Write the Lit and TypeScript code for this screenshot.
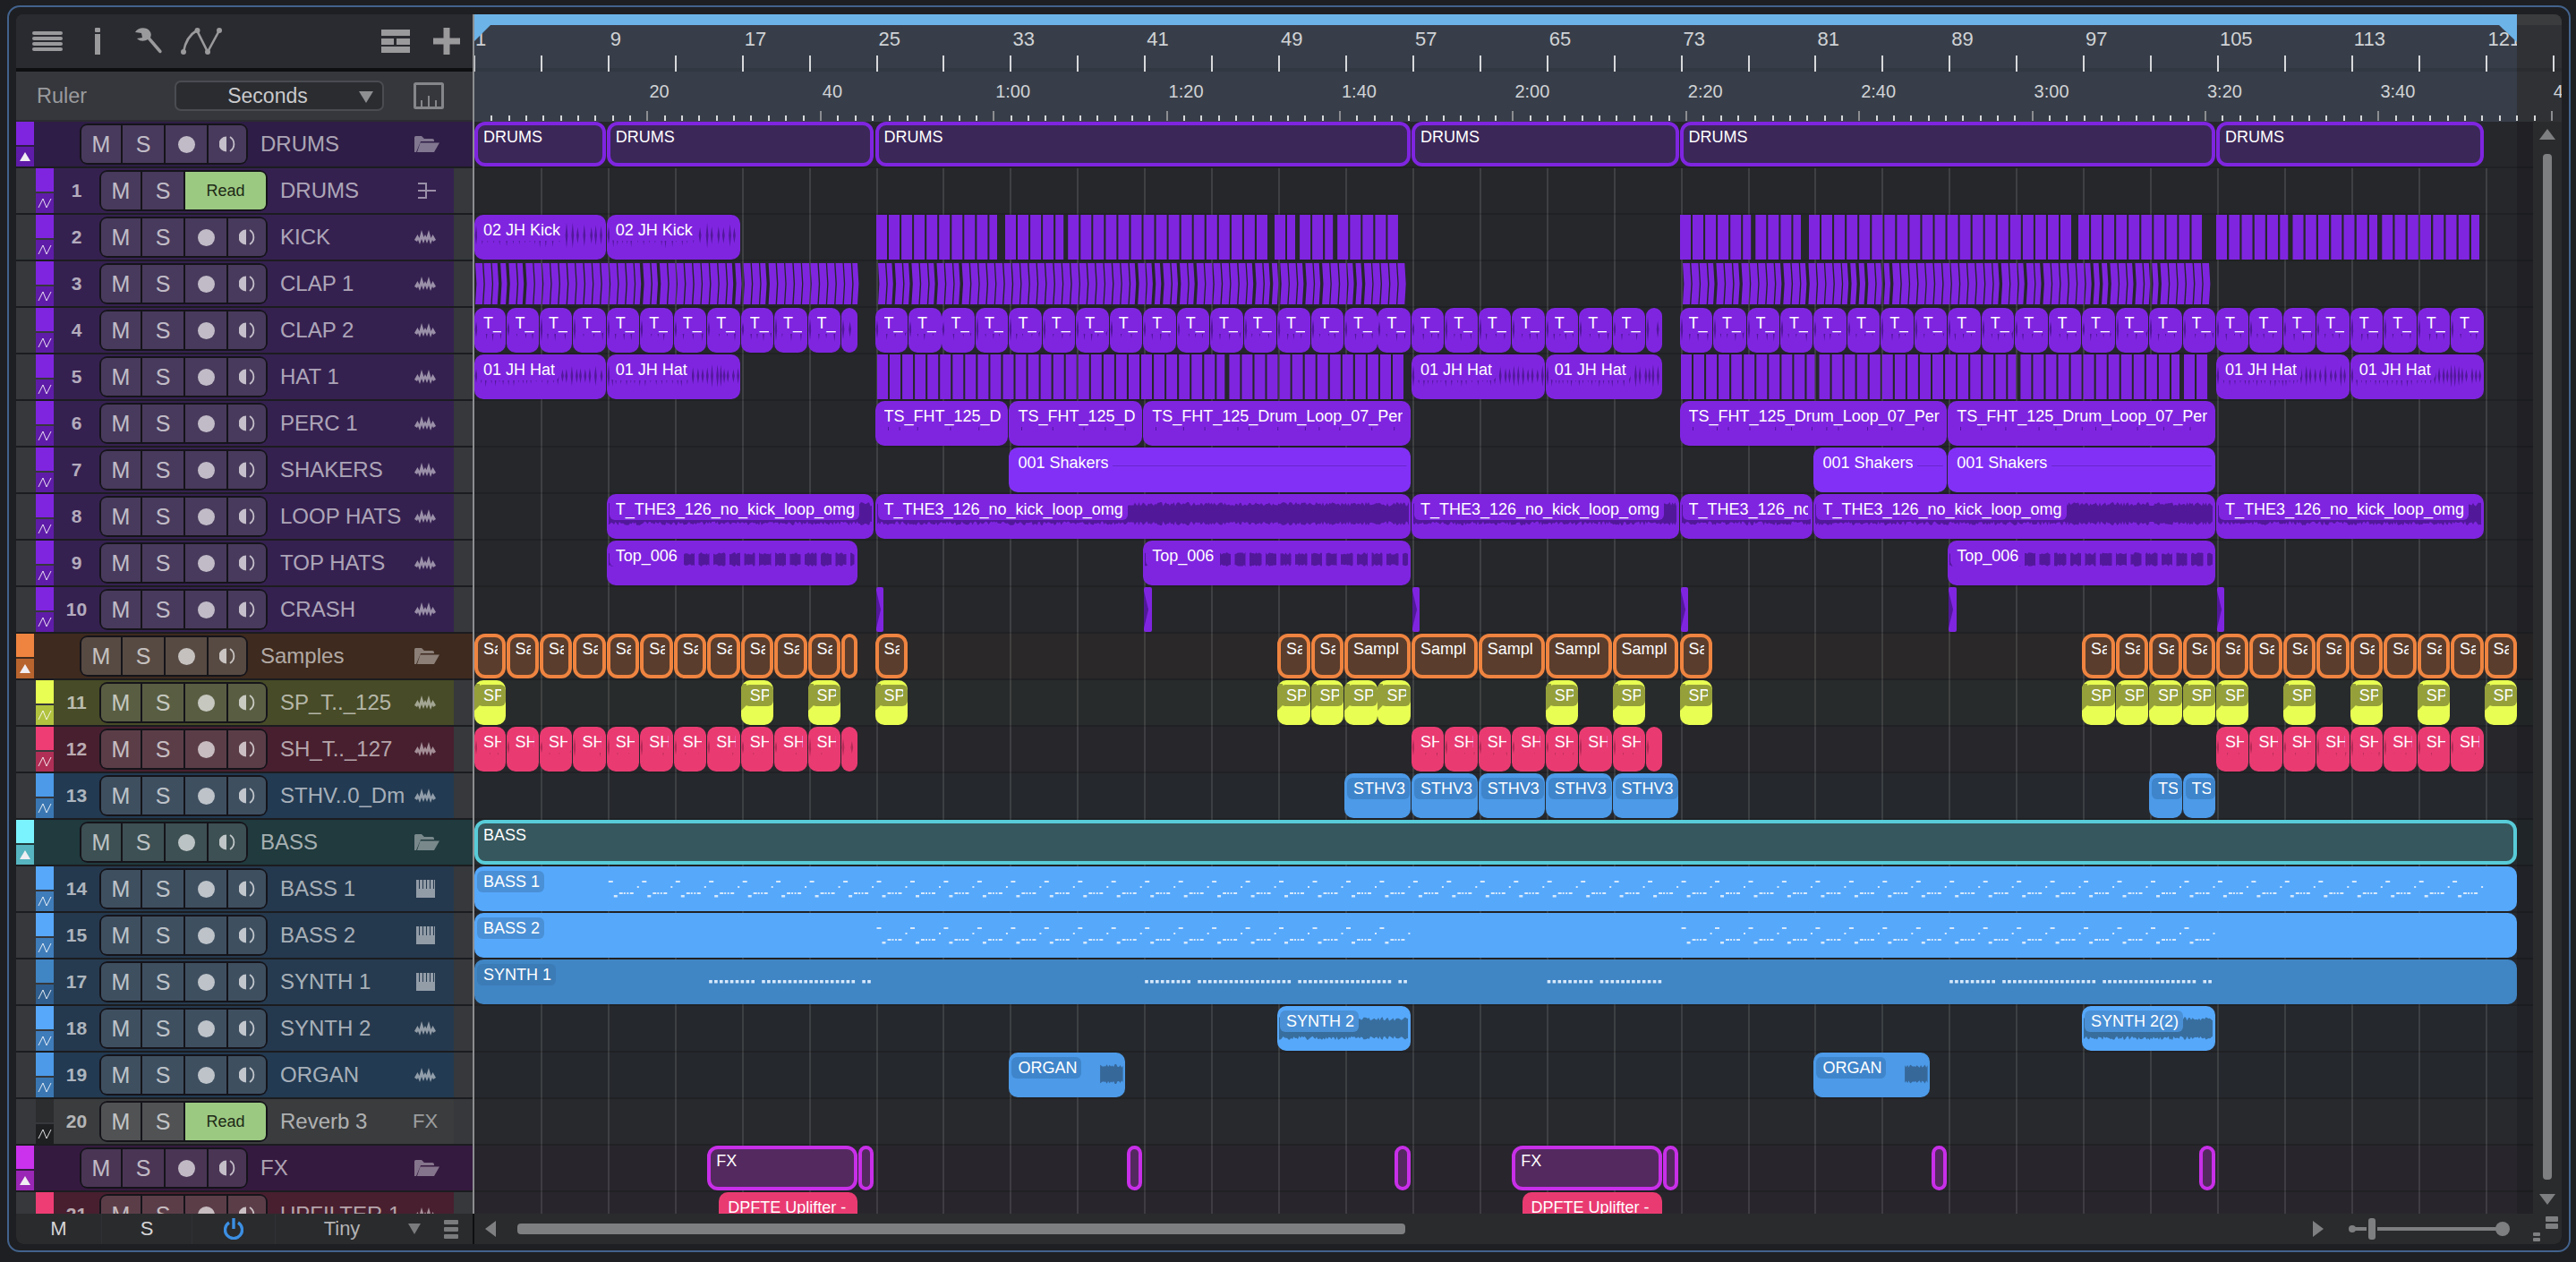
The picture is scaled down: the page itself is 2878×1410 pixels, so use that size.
import { LitElement, html, css } from "lit";
import { customElement } from "lit/decorators.js";

const BAR = 18.73;
const ORIGIN = 1; // x of bar 1 inside the arrange column
const bx = (b: number) => ORIGIN + (b - 1) * BAR;

type Clip = { s: number; e: number; t?: string; c: string; w?: string; folder?: boolean; tight?: boolean };
type Row = {
  n?: string; name: string; theme: string; lane: string; folder?: boolean; read?: boolean; icon?: string;
  clips?: Clip[]; extra?: string;
};

function rng(seed: number) {
  let s = seed * 9301 + 49297;
  return () => { s = (s * 9301 + 49297) % 233280; return s / 233280; };
}
function spikes(w: number, period: number, A: number, c: number, seed: number, from = 2) {
  const r = rng(seed); let d = "";
  for (let x = from; x < w - 2; x += period * (0.7 + r() * 0.6)) {
    const a = A * (0.55 + r() * 0.45);
    d += `M${(x - 1.4).toFixed(1)} ${c}L${x.toFixed(1)} ${(c - a).toFixed(1)}L${(x + 1.4).toFixed(1)} ${c}L${x.toFixed(1)} ${(c + a).toFixed(1)}Z`;
  }
  return d;
}
function dense(w: number, A: number, c: number, seed: number, burst = 0, from = 2) {
  const r = rng(seed); let up = "", dn: string[] = [];
  let first = true; let d = "";
  const flush = () => { if (!first) { d += up + dn.reverse().join("") + "Z"; } up = ""; dn = []; first = true; };
  for (let x = from; x < w - 2; x += 1.5) {
    const ph = burst ? (x % burst) / burst : 0;
    if (burst && ph > 0.82) { flush(); continue; }
    const a = A * (0.65 + r() * 0.35);
    up += `${first ? "M" : "L"}${x.toFixed(1)} ${(c - a).toFixed(1)}`;
    dn.push(`L${x.toFixed(1)} ${(c + a).toFixed(1)}`);
    first = false;
  }
  flush();
  return d;
}
function waveFor(kind: string, w: number, seed: number) {
  switch (kind) {
    case "kick": return spikes(w, 6.2, 15, 23, seed);
    case "hat": return spikes(w, 5.2, 13, 24, seed);
    case "t": return spikes(w, 9, 14, 24, seed);
    case "sh": return spikes(w, 12, 11, 23, seed);
    case "dense": return dense(w, 13, 22, seed, 0, 2);
    case "top": return dense(w, 8, 21, seed, 17, 2);
    case "synth": return dense(w, 13, 25, seed, 0, 2);
    case "organ": return dense(w, 11, 24, seed, 0, Math.max(2, w - 28));
    case "sparse": { let d = ""; const r = rng(seed); for (let x = 14; x < w; x += 12 + r() * 26) d += `M${x.toFixed(1)} 25h1v8h-1Z`; return d; }
    case "line": return `M100 20h${Math.max(0, w - 104)}v1h-${Math.max(0, w - 104)}Z`;
    case "crash": return `M0 4L${w * 0.6} 25L0 46Z`;
    case "yellow": return "M0 4h6v24l-6 6Z";
  }
  return "";
}

function seq(start: number, end: number, step: number, c: string, t: string, w?: string): Clip[] {
  const out: Clip[] = [];
  for (let b = start; b + step <= end + 0.001; b += step) out.push({ s: b, e: b + step, t, c, w });
  return out;
}
function at(bars: number[], len: number, c: string, t: string, w?: string): Clip[] {
  return bars.map((b) => ({ s: b, e: b + len, t, c, w }));
}

// Small block patterns (kick / clap / hat hits), one path per lane. from/to are page x.
function blocks(from: number, to: number, pitch: number, width: number, gaps: [number, number][], seed: number, chevron = false) {
  const r = rng(seed); let d = "";
  let x = from;
  while (x + 3 < to) {
    const g = gaps.find(([a, b]) => x + width > a && x < b);
    let wd = chevron ? (r() < 0.25 ? width - 2 : width) : (r() < 0.08 ? width - 3 : width);
    wd = Math.min(wd, to - x);
    const X = x - 528;
    if (g) {
      if (g[0] - x > 3) d += `M${X.toFixed(1)} 0h${(g[0] - x).toFixed(1)}v50h-${(g[0] - x).toFixed(1)}Z`;
      x = g[1];
      continue;
    }
    if (chevron) d += `M${X.toFixed(1)} 2h${wd}l1.4 23l-1.4 23h-${wd}l1.4 -23Z`;
    else d += `M${X.toFixed(1)} 0h${wd}v50h-${wd}Z`;
    x += pitch;
  }
  return d;
}
function bassNotes(segments: [number, number][]) {
  let d = "";
  const unit = 2 * BAR;
  for (const [s, e] of segments) {
    for (let X = bx(s) + 1; X < bx(e) - 8; X += unit) {
      d += `M${X.toFixed(1)} 16h5v2h-5Z`;
      d += `M${(X + 6).toFixed(1)} 32h4v2.5h-4Z`;
      d += `M${(X + 12).toFixed(1)} 29h4v2h-4ZM${(X + 17).toFixed(1)} 29h2v2h-2ZM${(X + 20.5).toFixed(1)} 29h2v2h-2ZM${(X + 24).toFixed(1)} 29h4v2h-4Z`;
      d += `M${(X + 32).toFixed(1)} 22h2v2h-2Z`;
    }
  }
  return d;
}
function synthDots(segments: [number, number][]) {
  let d = "";
  for (const [s, e] of segments) {
    for (let x = bx(s) + 1; x < bx(e) - 4; x += 5.9) {
      const off = (x - bx(s)) % 56;
      if (off > 52) continue;
      d += `M${x.toFixed(1)} 23h3.6v3.6h-3.6Z`;
    }
  }
  return d;
}

const P = "c-purple";
const kickGaps = (o: number): [number, number][] => [[o + 135, o + 144], [o + 437, o + 445]];

const SA = "Sa";
const ROWS: Row[] = [
  { name: "DRUMS", theme: "t-purple-f", lane: "l-purple", folder: true,
    clips: [[1, 9], [9, 25], [25, 57], [57, 73], [73, 105], [105, 121]].map(([s, e]) => ({ s, e, t: "DRUMS", c: "c-f-purple", folder: true })) },
  { n: "1", name: "DRUMS", theme: "t-purple", lane: "l-purple", read: true, icon: "bus" },
  { n: "2", name: "KICK", theme: "t-purple", lane: "l-purple", icon: "wave",
    clips: at([1, 9], 8, P, "02 JH Kick", "kick"),
    extra: blocks(979, 1562, 14.05, 12, kickGaps(979), 3) + blocks(1877, 2460, 14.05, 12, kickGaps(1877), 5) + blocks(2476, 2775, 14.25, 12, [], 7) },
  { n: "3", name: "CLAP 1", theme: "t-purple", lane: "l-purple", icon: "wave",
    extra: blocks(531, 958, 9.36, 8, [], 11, true) + blocks(981, 1570, 9.36, 8, [], 12, true) + blocks(1880, 2468, 9.36, 8, [], 13, true) },
  { n: "4", name: "CLAP 2", theme: "t-purple", lane: "l-purple", icon: "wave",
    clips: [
      ...seq(1, 23, 2, P, "T_", "t"), { s: 23, e: 24, c: P, w: "t" },
      ...seq(25, 57, 2, P, "T_", "t"),
      ...seq(57, 71, 2, P, "T_", "t"), { s: 71, e: 72, c: P, w: "t" },
      ...seq(73, 105, 2, P, "T_", "t"),
      ...seq(105, 121, 2, P, "T_", "t"),
    ] },
  { n: "5", name: "HAT 1", theme: "t-purple", lane: "l-purple", icon: "wave",
    clips: [...at([1, 9], 8, P, "01 JH Hat", "hat"), { s: 57, e: 65, t: "01 JH Hat", c: P, w: "hat" }, { s: 65, e: 72, t: "01 JH Hat", c: P, w: "hat" },
      { s: 105, e: 113, t: "01 JH Hat", c: P, w: "hat" }, { s: 113, e: 121, t: "01 JH Hat", c: P, w: "hat" }],
    extra: blocks(980, 1570, 14.05, 12, [], 21) + blocks(1878, 2468, 14.05, 12, [], 23) },
  { n: "6", name: "PERC 1", theme: "t-purple", lane: "l-purple", icon: "wave",
    clips: [
      { s: 25, e: 33, t: "TS_FHT_125_D", c: P, w: "sparse" }, { s: 33, e: 41, t: "TS_FHT_125_D", c: P, w: "sparse" },
      { s: 41, e: 57, t: "TS_FHT_125_Drum_Loop_07_Per", c: P, w: "sparse" },
      { s: 73, e: 89, t: "TS_FHT_125_Drum_Loop_07_Per", c: P, w: "sparse" }, { s: 89, e: 105, t: "TS_FHT_125_Drum_Loop_07_Per", c: P, w: "sparse" },
    ] },
  { n: "7", name: "SHAKERS", theme: "t-purple", lane: "l-purple", icon: "wave",
    clips: [{ s: 33, e: 57, t: "001 Shakers", c: "c-violet", w: "line" }, { s: 81, e: 89, t: "001 Shakers", c: "c-violet", w: "line" }, { s: 89, e: 105, t: "001 Shakers", c: "c-violet", w: "line" }] },
  { n: "8", name: "LOOP HATS", theme: "t-purple", lane: "l-purple", icon: "wave",
    clips: [[9, 25], [25, 57], [57, 73], [73, 81], [81, 105], [105, 121]].map(([s, e]) => ({ s, e, t: e - s < 10 ? "T_THE3_126_nc" : "T_THE3_126_no_kick_loop_omg", c: P, w: "dense" })) },
  { n: "9", name: "TOP HATS", theme: "t-purple", lane: "l-purple", icon: "wave",
    clips: [[9, 24], [41, 57], [89, 105]].map(([s, e]) => ({ s, e, t: "Top_006", c: P, w: "top" })) },
  { n: "10", name: "CRASH", theme: "t-purple", lane: "l-purple", icon: "wave",
    clips: [25, 41, 57, 73, 89, 105].map((s) => ({ s, e: s + 0.45, c: "c-crash", w: "crash", tight: true })) },
  { name: "Samples", theme: "t-orange-f", lane: "l-orange", folder: true,
    clips: [
      ...seq(1, 23, 2, "c-f-orange", SA), { s: 23, e: 24, c: "c-f-orange" },
      { s: 25, e: 27, t: SA, c: "c-f-orange" }, { s: 49, e: 51, t: SA, c: "c-f-orange" }, { s: 51, e: 53, t: SA, c: "c-f-orange" },
      ...seq(53, 73, 4, "c-f-orange", "Sampl"),
      { s: 73, e: 75, t: SA, c: "c-f-orange" },
      ...seq(97, 123, 2, "c-f-orange", SA),
    ].map((c) => ({ ...c, folder: true })) },
  { n: "11", name: "SP_T.._125", theme: "t-yellow", lane: "l-yellow", icon: "wave",
    clips: at([1, 17, 21, 25, 49, 51, 53, 55, 65, 69, 73, 97, 99, 101, 103, 105, 109, 113, 117, 121], 2, "c-yellow", "SP", "yellow") },
  { n: "12", name: "SH_T.._127", theme: "t-pink", lane: "l-pink", icon: "wave",
    clips: [
      ...seq(1, 23, 2, "c-pink", "SH", "sh"), { s: 23, e: 24, c: "c-pink", w: "sh" },
      ...seq(57, 71, 2, "c-pink", "SH", "sh"), { s: 71, e: 72, c: "c-pink", w: "sh" },
      ...seq(105, 121, 2, "c-pink", "SH", "sh"),
    ] },
  { n: "13", name: "STHV..0_Dm", theme: "t-blue", lane: "l-blue", icon: "wave",
    clips: [...at([53, 57, 61, 65, 69], 4, "c-sthv", "STHV3"), ...at([101, 103], 2, "c-sthv", "TS")] },
  { name: "BASS", theme: "t-cyan-f", lane: "l-cyan", folder: true, clips: [{ s: 1, e: 123, t: "BASS", c: "c-f-cyan", folder: true }] },
  { n: "14", name: "BASS 1", theme: "t-bass", lane: "l-blue", icon: "keys", clips: [{ s: 1, e: 123, t: "BASS 1", c: "c-bass" }],
    extra: "notes:" + bassNotes([[9, 24], [25, 72], [73, 121]]) },
  { n: "15", name: "BASS 2", theme: "t-bass", lane: "l-blue", icon: "keys", clips: [{ s: 1, e: 123, t: "BASS 2", c: "c-bass" }],
    extra: "notes:" + bassNotes([[25, 57], [73, 105]]) },
  { n: "17", name: "SYNTH 1", theme: "t-synth", lane: "l-blue", icon: "keys", clips: [{ s: 1, e: 123, t: "SYNTH 1", c: "c-synth" }],
    extra: "notes:" + synthDots([[15, 25], [41, 57], [65, 72], [89, 105]]) },
  { n: "18", name: "SYNTH 2", theme: "t-bass", lane: "l-blue", icon: "wave",
    clips: [{ s: 49, e: 57, t: "SYNTH 2", c: "c-bass", w: "synth" }, { s: 97, e: 105, t: "SYNTH 2(2)", c: "c-bass", w: "synth" }] },
  { n: "19", name: "ORGAN", theme: "t-blue", lane: "l-blue", icon: "wave",
    clips: [{ s: 33, e: 40, t: "ORGAN", c: "c-sthv", w: "organ" }, { s: 81, e: 88, t: "ORGAN", c: "c-sthv", w: "organ" }] },
  { n: "20", name: "Reverb 3", theme: "t-gray", lane: "l-gray", read: true, icon: "fx" },
  { name: "FX", theme: "t-mag-f", lane: "l-mag", folder: true,
    clips: [
      { s: 15, e: 24, t: "FX", c: "c-f-mag", folder: true }, { s: 63, e: 72, t: "FX", c: "c-f-mag", folder: true },
      ...[24, 40, 56, 72, 88, 104].map((s) => ({ s, e: s + 1, c: "c-f-mag", folder: true })),
    ] },
  { n: "21", name: "UPFILTER 1", theme: "t-pink", lane: "l-mag", icon: "wave",
    clips: [{ s: 15.7, e: 24, t: "DPFTE Uplifter -", c: "c-pink" }, { s: 63.6, e: 72, t: "DPFTE Uplifter -", c: "c-pink" }] },
];

const BIG_TICKS: number[] = [];
for (let b = 1; b <= 125; b += 4) BIG_TICKS.push(b);
const BAR_LABELS: number[] = [];
for (let b = 9; b <= 121; b += 8) BAR_LABELS.push(b);
const SECS: number[] = [];
for (let s = 2; s <= 240; s += 2) SECS.push(s);
const fmt = (s: number) => (s < 60 ? `${s}` : `${Math.floor(s / 60)}:${String(s % 60).padStart(2, "0")}`);
const sx = (s: number) => 1 + 9.67 * s;

const iconWave = html`<svg class="ric" width="24" height="18" viewBox="0 0 24 18"><path d="M0 12L3.5 6L5.500 10L8 1L10.500 9L12 6L13.500 9L16 1L18.500 10L20.500 6L24 12L21 14L20 12L18 17L16 11L14 16L12 11L10 16L8 11L6 17L4 12L3 14Z" fill="currentColor"/></svg>`;
const iconKeys = html`<svg class="ric" width="22" height="20" viewBox="0 0 22 20"><path d="M0 0h3v10h1V0h3v10h1V0h3v10h1V0h3v10h1V0h3v10h1V0h1v20H0Z" fill="currentColor"/></svg>`;
const iconBus = html`<svg class="ric" width="20" height="20" viewBox="0 0 20 20"><path d="M0 1h10v2H0ZM8 1h2v18H8ZM0 17h10v2H0ZM0 9h20v2H0Z" fill="currentColor"/></svg>`;
const iconFolder = html`<svg class="ric" width="28" height="18" viewBox="0 0 28 18"><path d="M0 1.500Q0 0 1.500 0H8L11 3H20Q22 3 22 5V6H7L2 18H0Z" fill="currentColor"/><path d="M6.500 7.500H28L22 18H3Z" fill="currentColor"/></svg>`;
const iconMono = html`<svg width="18" height="20" viewBox="0 0 18 20"><path d="M8 1.500A8.500 8.500 0 0 0 8 18.500Z" fill="currentColor"/><path d="M12 2A9.500 9.500 0 0 1 12 18" stroke="currentColor" stroke-width="1.800" fill="none"/></svg>`;
const iconAuto = html`<svg width="16" height="12" viewBox="0 0 16 12"><path d="M1 11L6 1L10 11L15 1" fill="none" stroke="currentColor" stroke-width="1"/></svg>`;

@customElement("app-root")
export class AppRoot extends LitElement {
  static styles = css`
    :host { display: block; width: 2878px; height: 1410px; background: #1e1f22; font-family: "Liberation Sans", Arial, sans-serif; overflow: hidden; }
    .frame { box-sizing: border-box; height: 1393px; margin: 6px 6px 0 8px; width: 2864px; border: 2px solid #42628c; border-radius: 14px; padding: 8px; }
    .panel { width: 2844px; height: 1374px; display: grid; grid-template-columns: 510px 2334px; grid-template-rows: 120px 1220px 34px; background: #101113; border-radius: 8px; overflow: hidden; }

    .head { display: flex; flex-direction: column; background: #35373c; }
    .toolbar { height: 60px; flex: none; background: #2a2b30; display: flex; align-items: center; padding: 0 14px 0 18px; color: #9a9a9c; border-bottom: 4px solid #0e0f10; }
    .toolbar svg { flex: none; display: block; }
    .toolbar .spacer { flex: 1; }
    .rulerrow { border-bottom: 2px solid #2b2c30; box-sizing: border-box; flex: 1; display: flex; align-items: center; color: #9a9b9e; padding-left: 23px; font-size: 23.5px; }
    .rulerrow .lab { width: 154px; }
    .select { box-sizing: border-box; width: 234px; height: 34px; border: 2px solid #4a4c52; border-radius: 7px; background: #2b2c30; color: #c9cacc; display: flex; align-items: center; font-size: 23px; position: relative; justify-content: center; padding-right: 26px; }
    .select i { position: absolute; right: 10px; top: 10px; width: 0; height: 0; border-left: 8px solid transparent; border-right: 8px solid transparent; border-top: 13px solid #8e8f91; }
    .rulerrow svg { margin-left: 33px; color: #85868a; }

    .tracks { display: flex; flex-direction: column; gap: 2px; background: #1b1c1f; overflow: hidden; }
    .row { flex: none; height: 50px; display: flex; align-items: center; color: rgba(255,255,255,.62); background: var(--bg); }
    .row.track { background: #36383b; padding-left: 22px; padding-right: 21px; }
    .strip { flex: none; width: 20px; height: 50px; display: flex; flex-direction: column; gap: 2px; }
    .strip b { display: block; height: 26px; background: var(--s1); }
    .strip u { display: flex; flex: 1; align-items: center; justify-content: center; background: var(--s2); color: rgba(255,255,255,.85); text-decoration: none; }
    .tri { width: 0; height: 0; border-left: 6px solid transparent; border-right: 6px solid transparent; border-bottom: 10px solid #f0eef2; }
    .body { flex: 1; height: 50px; display: flex; align-items: center; background: var(--bg); min-width: 0; }
    .num { flex: none; width: 51px; text-align: center; font-size: 21px; font-weight: 700; color: rgba(255,255,255,.64); }
    .group { flex: none; box-sizing: border-box; display: flex; gap: 2px; padding: 2px; border-radius: 9px; background: #15141a; height: 46px; }
    .folder .group { margin-left: 51px; }
    .cell { height: 42px; background: var(--btn); display: flex; align-items: center; justify-content: center; color: rgba(255,255,255,.68); font-size: 25px; box-sizing: border-box; }
    .cell.m { width: 44px; border-radius: 6px 0 0 6px; }
    .cell.s { width: 46px; }
    .cell.r { width: 46px; }
    .cell.e { width: 42px; border-radius: 0 6px 6px 0; }
    .cell.read { width: 90px; background: #9cc982; color: #1d2a16; font-size: 18px; border-radius: 0 6px 6px 0; }
    .dot { width: 19px; height: 19px; border-radius: 50%; background: rgba(255,255,255,.66); }
    .name { margin-left: 14px; font-size: 24px; white-space: nowrap; flex: 1; min-width: 0; }
    .ric { flex: none; color: rgba(255,255,255,.5); margin-right: 20px; }
    .folder .ric { margin-right: 37px; color: rgba(255,255,255,.4); }
    .fx { flex: none; font-size: 22px; color: rgba(255,255,255,.5); margin-right: 20px; width: 26px; }

    .t-purple { --bg: #352150; --s1: #7f25e0; --s2: #5f1ca8; --btn: #483a5c; }
    .t-purple-f { --bg: #2e1d46; --s1: #7f25e0; --s2: #5f1ca8; --btn: #483a5c; }
    .t-orange-f { --bg: #3e2a1e; --s1: #ef8440; --s2: #b8642f; --btn: #574a43; }
    .t-yellow { --bg: #474b27; --s1: #e8fe52; --s2: #b1c23f; --btn: #595e43; }
    .t-pink { --bg: #481f2f; --s1: #ee3d74; --s2: #b02f57; --btn: #5b3d48; }
    .t-blue { --bg: #223a52; --s1: #4c9ae8; --s2: #3a77b2; --btn: #3e4f60; }
    .t-bass { --bg: #25394e; --s1: #57a7fb; --s2: #3f7cba; --btn: #3e4f60; }
    .t-synth { --bg: #263b50; --s1: #4085c4; --s2: #305f8f; --btn: #3e4f60; }
    .t-cyan-f { --bg: #203a3e; --s1: #7bf3ff; --s2: #56b5c0; --btn: #3d5053; }
    .t-gray { --bg: #3a3c3e; --s1: #2c2d2f; --s2: #1e1f21; --btn: #505254; }
    .t-mag-f { --bg: #351a40; --s1: #cb32ee; --s2: #9a27b5; --btn: #4a3555; }

    .rul { position: relative; overflow: hidden; background: #2f3134; border-left: 2px solid #8c8d8f; box-sizing: border-box; }
    .rul .bg { position: absolute; left: 0; top: 12px; width: 2282px; height: 108px; background: #383e49; }
    .rul .sep { position: absolute; left: 0; top: 60px; width: 2332px; height: 4px; background: rgba(0,0,0,.09); }
    .rul .loop { position: absolute; left: 0; top: 0; width: 2282px; height: 12px; background: #6cb3e8; }
    .rul .loopend { position: absolute; left: 2282px; top: 0; width: 50px; height: 12px; background: #3a3c3e; }
    .rul svg.mk { position: absolute; left: 0; top: 12px; }
    .barclip { position: absolute; left: 0; top: 0; width: 2282px; height: 46px; overflow: hidden; }
    .tick { position: absolute; background: #d6d8da; width: 2px; }
    .tick.big { top: 46px; height: 18px; }
    .tick.sm { top: 113px; height: 6px; }
    .tick.long { top: 108px; height: 11px; background: #8b8d90; }
    .rl { position: absolute; color: #d0d3d6; white-space: nowrap; }
    .rl.bar { top: 15px; font-size: 22px; line-height: 26px; }
    .rl.sec { top: 74px; font-size: 20px; line-height: 24px; }

    .arr { display: flex; background: #26272b; overflow: hidden; }
    .canvas { position: relative; width: 2302px; height: 1220px; flex: none; overflow: hidden; border-left: 2px solid #8c8d8f; box-sizing: border-box; }
    .gl { position: absolute; top: 52px; bottom: 0; width: 2px; background: #3f4043; }
    .dim { position: absolute; left: 2282px; top: 0; bottom: 0; width: 18px; background: rgba(0,0,0,.13); pointer-events: none; z-index: 3; }
    .lanes { position: absolute; inset: 0 0 0 -2px; display: flex; flex-direction: column; gap: 2px; }
    .lane { position: relative; flex: none; height: 50px; box-shadow: 0 1px 0 1px rgba(0,0,0,.14); }
    .l-purple { background: transparent; }
    .l-orange { background: rgba(90,60,20,.08); }
    .l-yellow { background: rgba(70,90,50,.09); }
    .l-pink { background: rgba(70,30,50,.06); }
    .l-blue { background: rgba(30,70,80,.08); }
    .l-cyan { background: rgba(30,80,80,.1); }
    .l-gray { background: rgba(60,70,70,.07); }
    .l-mag { background: rgba(70,30,70,.07); }
    .lane svg.hits { position: absolute; left: 0; top: 0; }
    .hits.purple { fill: #7f25e0; }
    .hits.notes { fill: #d7e9fb; z-index: 2; }

    .clip { position: absolute; top: 0; height: 50px; border-radius: 10px; overflow: hidden; box-sizing: border-box; background: var(--f); }
    .clip svg { position: absolute; left: 0; top: 0; fill: var(--w); }
    .clip.tight { border-radius: 2px; }
    .lbl { position: absolute; left: 3px; top: 5px; height: 24px; box-sizing: border-box; max-width: calc(100% - 3px); padding: 0 5px 0 7px; background: var(--tag); border-radius: 6px; color: #fff; font-size: 18px; line-height: 24px; display: flex; }
    .lbl span { display: block; overflow: hidden; white-space: nowrap; min-width: 0; }
    .clip.stroked { border: 4px solid var(--st); border-radius: 12px; }
    .clip.stroked .lbl { left: -1px; top: 1px; max-width: 100%; padding-right: 4px; background: transparent; }
    .c-purple { --f: #7f25e0; --tag: #7f25e0; --w: #52189a; }
    .c-violet { --f: #8230f6; --tag: #8230f6; --w: #6a26cc; }
    .c-crash { --f: #7f25e0; --tag: #7f25e0; --w: #52189a; }
    .c-yellow { --f: #e8fe52; --tag: #95a03a; --w: #95a03a; }
    .c-pink { --f: #e93b72; --tag: #e93b72; --w: #b42b58; }
    .c-sthv { --f: #4c9ae8; --tag: #3f85cb; --w: #37689a; }
    .c-bass { --f: #56a8fb; --tag: #4a90d6; --w: #386e9e; }
    .c-synth { --f: #4085c4; --tag: #3b7bb6; --w: #386e9e; }
    .c-f-purple { --f: #3c2759; --st: #7f25e0; --tag: transparent; }
    .c-f-orange { --f: #5a3d2c; --st: #ef8440; --tag: transparent; }
    .c-f-cyan { --f: #36575d; --st: #58ccd8; --tag: transparent; }
    .c-f-mag { --f: #54295f; --st: #c82fe8; --tag: transparent; }

    .vs { flex: 1; background: #2a2b2d; display: flex; flex-direction: column; align-items: center; padding: 8px 0 10px; gap: 16px; box-sizing: border-box; }
    .up { width: 0; height: 0; border-left: 9px solid transparent; border-right: 9px solid transparent; border-bottom: 12px solid #7e7f81; flex: none; }
    .dn { width: 0; height: 0; border-left: 9px solid transparent; border-right: 9px solid transparent; border-top: 12px solid #7e7f81; flex: none; }
    .vthumb { width: 10px; flex: 1; background: #7e7f81; border-radius: 4px; }

    .foot { background: #2a2b2d; display: flex; align-items: center; color: #d5d5d7; font-size: 22px; }
    .foot > div { height: 34px; display: flex; align-items: center; justify-content: center; }
    .fm { width: 95px; border-right: 1px solid #303134; }
    .fs { width: 100px; border-right: 1px solid #303134; }
    .fp { width: 92px; border-right: 1px solid #303134; }
    .ft { width: 148px; color: #b3b3b5; }
    .arrow { width: 0; height: 0; border-left: 7px solid transparent; border-right: 7px solid transparent; border-top: 12px solid #7a7b7d; }
    .fl { margin-left: 26px; display: flex; flex-direction: column; gap: 3px; }
    .fl i { display: block; width: 16px; height: 5px; background: #7a7b7d; border-radius: 1px; }
    .fa { flex: none; }

    .hbar { background: #2a2b2d; display: flex; align-items: center; border-left: 2px solid #0e0f10; box-sizing: border-box; padding-left: 12px; }
    .la { width: 0; height: 0; border-top: 9px solid transparent; border-bottom: 9px solid transparent; border-right: 12px solid #7e7f81; flex: none; }
    .ra { width: 0; height: 0; border-top: 9px solid transparent; border-bottom: 9px solid transparent; border-left: 12px solid #7e7f81; flex: none; margin-left: 1014px; }
    .hthumb { flex: none; margin-left: 24px; width: 992px; height: 12px; border-radius: 4px; background: #7e7f81; }
    .zoom { flex: none; width: 180px; margin-left: 28px; position: relative; height: 24px; }
    .zoom .ln { position: absolute; left: 4px; right: 10px; top: 10px; height: 4px; background: #7e7f81; }
    .zoom .d1 { position: absolute; left: 0; top: 8px; width: 8px; height: 8px; border-radius: 50%; background: #7e7f81; }
    .zoom .th { position: absolute; left: 22px; top: 0; width: 8px; height: 24px; background: #7e7f81; border-radius: 3px; box-shadow: 0 0 0 2px #2a2b2d; }
    .zoom .d2 { position: absolute; right: 0; top: 4px; width: 16px; height: 16px; border-radius: 50%; background: #7e7f81; }
    .sz { margin-left: 26px; display: flex; align-items: flex-end; gap: 6px; height: 28px; }
    .sz div { display: flex; flex-direction: column; gap: 2px; }
    .sz i { display: block; background: #7e7f81; border-radius: 1px; }
    .sz .a i { width: 8px; height: 4px; }
    .sz .b { align-self: flex-start; }
    .sz .b i { width: 14px; height: 6px; }
  `;

  private renderClip(c: Clip, seed: number) {
    let left = bx(c.s) - (c.tight ? 0 : 1);
    let w = (c.e - c.s) * BAR - (c.tight ? 0 : 1);
    if (left < 2) { w -= 2 - left; left = 2; }
    const cls = `clip ${c.c} ${c.folder ? "stroked" : ""} ${c.tight ? "tight" : ""}`;
    return html`<div class=${cls} style="left:${left.toFixed(1)}px;width:${w.toFixed(1)}px">
      ${c.w ? html`<svg width=${w} height="50"><path d=${waveFor(c.w, w, seed)}></path></svg>` : ""}
      ${c.t ? html`<div class="lbl"><span>${c.t}</span></div>` : ""}
    </div>`;
  }

  private renderLane(r: Row, i: number) {
    const extra = r.extra;
    const isNotes = !!extra && extra.startsWith("notes:");
    return html`<div class="lane ${r.lane}">
      ${extra && !isNotes ? html`<svg class="hits purple" width="2300" height="50"><path d=${extra}></path></svg>` : ""}
      ${(r.clips || []).map((c, j) => this.renderClip(c, i * 31 + j * 7 + 1))}
      ${isNotes ? html`<svg class="hits notes" width="2300" height="50"><path d=${extra!.slice(6)}></path></svg>` : ""}
    </div>`;
  }

  private renderButtons(r: Row) {
    return html`<div class="group">
      <div class="cell m">M</div><div class="cell s">S</div>
      ${r.read
        ? html`<div class="cell read">Read</div>`
        : html`<div class="cell r"><div class="dot"></div></div><div class="cell e">${iconMono}</div>`}
    </div>`;
  }

  private renderIcon(r: Row) {
    if (r.folder) return iconFolder;
    if (r.icon === "wave") return iconWave;
    if (r.icon === "keys") return iconKeys;
    if (r.icon === "bus") return iconBus;
    if (r.icon === "fx") return html`<div class="fx">FX</div>`;
    return "";
  }

  private renderRow(r: Row) {
    if (r.folder) {
      return html`<div class="row folder ${r.theme}">
        <div class="strip"><b></b><u><div class="tri"></div></u></div>
        ${this.renderButtons(r)}
        <div class="name">${r.name}</div>
        ${this.renderIcon(r)}
      </div>`;
    }
    return html`<div class="row track ${r.theme}">
      <div class="strip"><b></b><u>${iconAuto}</u></div>
      <div class="body">
        <div class="num">${r.n}</div>
        ${this.renderButtons(r)}
        <div class="name">${r.name}</div>
        ${this.renderIcon(r)}
      </div>
    </div>`;
  }

  render() {
    return html`<div class="frame"><div class="panel">
      <div class="head">
        <div class="toolbar">
          <svg width="34" height="22" viewBox="0 0 34 22" fill="currentColor"><rect y="0" width="34" height="4" rx="2"/><rect y="6" width="34" height="4" rx="2"/><rect y="12" width="34" height="4" rx="2"/><rect y="18" width="34" height="4" rx="2"/></svg>
          <svg style="margin-left:36px" width="6" height="30" viewBox="0 0 6 30" fill="currentColor"><rect width="6" height="5" rx="1"/><rect y="7" width="6" height="23"/></svg>
          <svg style="margin-left:38px" width="32" height="30" viewBox="0 0 32 30"><path d="M14 1C9 -1 3 1 1 5L8 6L9 11L3 12C7 16 12 15 15 13L27 27C29 30 32 27 30 25L18 11C20 7 18 3 14 1Z" fill="currentColor"/></svg>
          <svg style="margin-left:20px" width="46" height="30" viewBox="0 0 46 30"><g fill="none" stroke="currentColor" stroke-width="2.600"><path d="M3 27C5 15 11 7 18 3"/><path d="M18 3L30 27"/><path d="M30 27L43 3"/></g><g fill="currentColor"><circle cx="3" cy="27" r="3"/><circle cx="18.500" cy="3" r="3"/><circle cx="30" cy="27" r="3"/><circle cx="43" cy="3" r="3"/></g></svg>
          <div class="spacer"></div>
          <svg width="32" height="26" viewBox="0 0 32 26" fill="currentColor"><rect width="32" height="7"/><rect y="10" width="14" height="7"/><rect x="17" y="10" width="15" height="7"/><rect y="19" width="32" height="7"/></svg>
          <svg style="margin-left:26px" width="30" height="30" viewBox="0 0 30 30" fill="currentColor"><rect x="11.500" width="7" height="30"/><rect y="11.500" width="30" height="7"/></svg>
        </div>
        <div class="rulerrow">
          <div class="lab">Ruler</div>
          <div class="select">Seconds<i></i></div>
          <svg width="34" height="30" viewBox="0 0 34 30" fill="none" stroke="currentColor" stroke-width="3"><rect x="1.500" y="1.500" width="31" height="27" rx="1"/><path d="M9 27v-7M17 27v-12M25 27v-7" stroke-width="2"/></svg>
        </div>
      </div>

      <div class="rul">
        <div class="bg"></div><div class="sep"></div>
        <div class="loop"></div><div class="loopend"></div>
        ${BIG_TICKS.map((b) => html`<div class="tick big" style="left:${(bx(b) - 2).toFixed(1)}px"></div>`)}
        <div class="barclip">
          <div class="rl bar" style="left:1px">1</div>
          ${BAR_LABELS.map((b) => html`<div class="rl bar" style="left:${(bx(b) + 1).toFixed(1)}px">${b}</div>`)}
        </div>
        <svg class="mk" width="2332" height="20"><path d="M0 0H18L0 18Z" fill="#6cb3e8"></path><path d="M2262 0H2282V19Z" fill="#6cb3e8"></path></svg>
        ${SECS.map((s) => html`<div class="tick ${s % 20 === 0 ? "long" : "sm"}" style="left:${(sx(s) - 2).toFixed(1)}px"></div>`)}
        ${SECS.filter((s) => s % 20 === 0).map((s) => html`<div class="rl sec" style="left:${(sx(s) + 1).toFixed(1)}px">${fmt(s)}</div>`)}
      </div>

      <div class="tracks">${ROWS.map((r) => this.renderRow(r))}</div>

      <div class="arr">
        <div class="canvas">
          ${BIG_TICKS.filter((b) => b > 1 && b <= 121).map((b) => html`<div class="gl" style="left:${(bx(b) - 2).toFixed(1)}px"></div>`)}
          <div class="lanes">${ROWS.map((r, i) => this.renderLane(r, i))}</div>
          <div class="dim"></div>
        </div>
        <div class="vs"><div class="up"></div><div class="vthumb"></div><div class="dn"></div></div>
      </div>

      <div class="foot">
        <div class="fm">M</div><div class="fs">S</div>
        <div class="fp"><svg width="22" height="24" viewBox="0 0 22 24" fill="none" stroke="#3c8fe2" stroke-width="3.400"><path d="M6 5A9.500 9.500 0 1 0 16 5"/><path d="M11 0V12"/></svg></div>
        <div class="ft">Tiny</div>
        <div class="fa"><div class="arrow"></div></div>
        <div class="fl"><i></i><i></i><i></i></div>
      </div>

      <div class="hbar">
        <div class="la"></div><div class="hthumb"></div><div class="ra"></div>
        <div class="zoom"><div class="ln"></div><div class="d1"></div><div class="th"></div><div class="d2"></div></div>
        <div class="sz"><div class="a"><i></i><i></i></div><div class="b"><i></i><i></i></div></div>
      </div>
    </div></div>`;
  }
}
